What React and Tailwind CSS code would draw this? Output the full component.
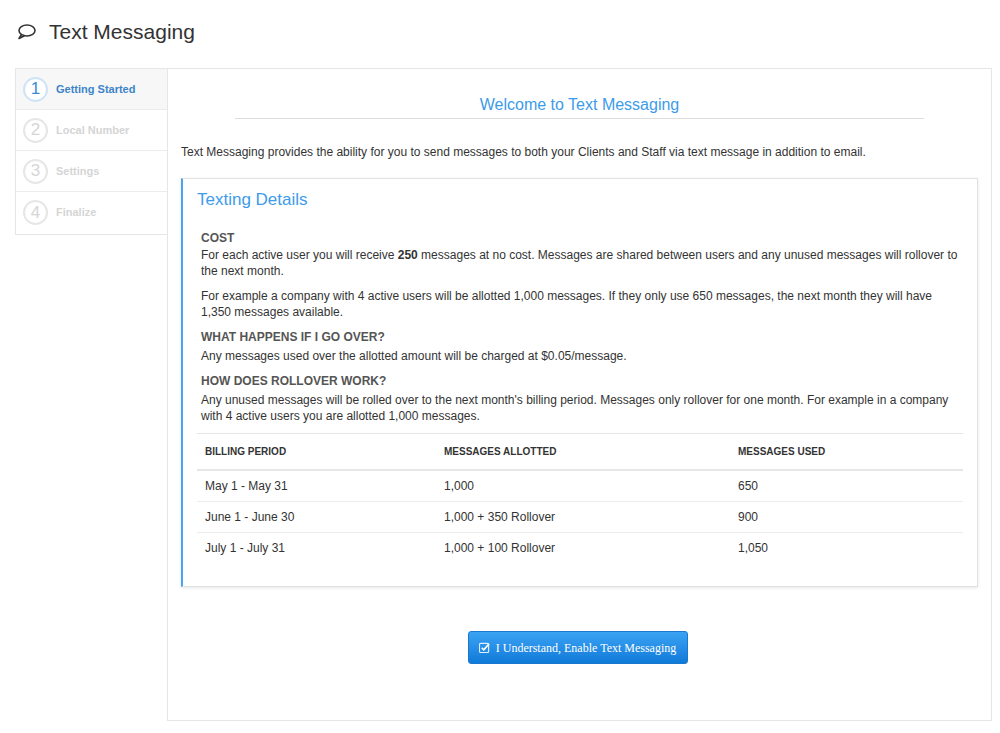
import React from "react";

const steps = ["Getting Started", "Local Number", "Settings", "Finalize"];
const rows = [
  ["May 1 - May 31", "1,000", "650"],
  ["June 1 - June 30", "1,000 + 350 Rollover", "900"],
  ["July 1 - July 31", "1,000 + 100 Rollover", "1,050"],
];

export default function App() {
  return (
    <div className="w-[1000px] h-[733px] bg-white text-[#333] font-[Liberation_Sans,Arial,sans-serif] text-[12px]">
      <div className="flex items-center h-[64px] pl-[16px]">
        <svg width="20" height="18" viewBox="0 0 20 18" fill="none" stroke="#333" strokeWidth="1.6">
          <ellipse cx="11" cy="7.5" rx="8" ry="5.5" />
          <path d="M5.5 11.5 L3 15.5 L8.5 12.8" strokeLinejoin="round" />
        </svg>
        <span className="ml-[13px] text-[21px] text-[#333]">Text Messaging</span>
      </div>
      <div className="flex pl-[15px] pt-[4px]">
        <div className="w-[152px] h-[167px] border border-[#e6e6e6] border-r-0 self-start">
          {steps.map((s, i) => (
            <div key={s} className={`flex items-center h-[41px] pl-[7px] ${i < 3 ? "border-b border-[#ececec]" : ""} ${i === 0 ? "bg-[#f7f7f7]" : ""}`}>
              <div className={`w-[25px] h-[25px] rounded-full border-2 flex items-center justify-center text-[17px] ${i === 0 ? "border-[#cfe3f7] text-[#3d8bd6] bg-white" : "border-[#e6e6e6] text-[#d5d5d5]"}`}>{i + 1}</div>
              <span className={`ml-[8px] font-bold text-[11px] ${i === 0 ? "text-[#3d84c9]" : "text-[#d5d5d5]"}`}>{s}</span>
            </div>
          ))}
        </div>
        <div className="w-[825px] h-[653px] border border-[#e6e6e6] pl-[13px] pr-[13px]">
          <div className="mx-[54px] mt-[24px] border-b border-[#dedede] pb-[1px] text-center text-[16px] text-[#3d9be9]">Welcome to Text Messaging</div>
          <p className="mt-[24px] text-[12px]">Text Messaging provides the ability for you to send messages to both your Clients and Staff via text message in addition to email.</p>
          <div className="mt-[17px] w-[797px] h-[409px] border border-[#e2e2e2] border-l-2 border-l-[#4aa3ee] shadow-[0_1px_3px_rgba(0,0,0,0.1)] px-[14px]">
            <div className="mt-[8px] text-[17px] text-[#3d9be9]">Texting Details</div>
            <div className="px-[4px] leading-[16px]">
              <div className="mt-[17px] font-bold text-[#555] text-[12px]">COST</div>
              <p className="mt-[1px]">For each active user you will receive <b>250</b> messages at no cost. Messages are shared between users and any unused messages will rollover to the next month.</p>
              <p className="mt-[9px]">For example a company with 4 active users will be allotted 1,000 messages. If they only use 650 messages, the next month they will have 1,350 messages available.</p>
              <div className="mt-[9px] font-bold text-[#555]">WHAT HAPPENS IF I GO OVER?</div>
              <p className="mt-[3px]">Any messages used over the allotted amount will be charged at $0.05/message.</p>
              <div className="mt-[9px] font-bold text-[#555]">HOW DOES ROLLOVER WORK?</div>
              <p className="mt-[3px]">Any unused messages will be rolled over to the next month's billing period. Messages only rollover for one month. For example in a company with 4 active users you are allotted 1,000 messages.</p>
            </div>
            <div className="mt-[9px] border-t border-[#e6e6e6]">
              <div className="grid grid-cols-[239px_294px_1fr] h-[37px] items-center px-[8px] border-b-2 border-[#e6e6e6] text-[10px] font-bold text-[#333]">
                <div>BILLING PERIOD</div><div>MESSAGES ALLOTTED</div><div>MESSAGES USED</div>
              </div>
              {rows.map((r) => (
                <div key={r[0]} className="grid grid-cols-[239px_294px_1fr] h-[31px] items-center px-[8px] border-b border-[#ececec] last:border-b-0">
                  <div>{r[0]}</div><div>{r[1]}</div><div>{r[2]}</div>
                </div>
              ))}
            </div>
          </div>
          <div className="flex justify-center mt-[44px] ml-[-4px]">
            <button className="w-[220px] h-[33px] rounded-[3px] border border-[#1a78d0] bg-gradient-to-b from-[#3aa3f3] to-[#0f7ad9] text-white font-[Liberation_Serif,serif] text-[12px] whitespace-nowrap flex items-center justify-center gap-[6px]">
              <svg width="11" height="11" viewBox="0 0 12 12"><rect x="0.5" y="1.5" width="10" height="10" rx="1.5" fill="none" stroke="#dbeeff" strokeWidth="1.3" /><path d="M3 6.5 L5.2 8.5 L11 2" stroke="#fff" strokeWidth="1.8" fill="none" /></svg>
              I Understand, Enable Text Messaging
            </button>
          </div>
        </div>
      </div>
    </div>
  );
}
